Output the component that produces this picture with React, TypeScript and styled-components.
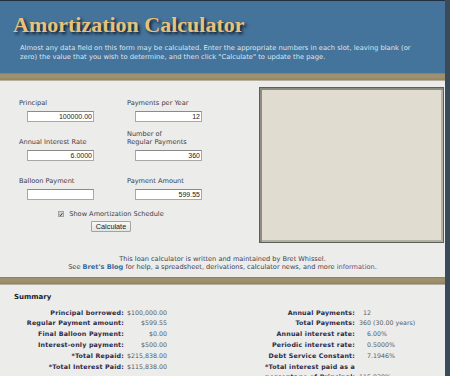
import React from "react";
import styled, { createGlobalStyle } from "styled-components";

const Global = createGlobalStyle`
  html, body { margin: 0; padding: 0; overflow: hidden; background: #3b4a59; }
  * { box-sizing: border-box; }
`;

const Frame = styled.div`
  width: 450px;
  height: 376px;
  overflow: hidden;
  display: flex;
  background: #3b4a59;
`;

const Page = styled.div`
  width: 445px;
  flex: none;
  background: #ececea;
  border-top: 1px solid #22303d;
  font-family: "DejaVu Sans", Verdana, sans-serif;
  color: #3d3b45;
`;

const Header = styled.header`
  background: #44739b;
  height: 72px;
  padding: 10.6px 0 0 13px;
`;

const Title = styled.h1`
  margin: 0;
  font-family: "Liberation Serif", "Times New Roman", serif;
  font-weight: bold;
  font-size: 22px;
  line-height: 26px;
  color: #e8c27c;
  text-shadow: 2px 2px 3px #121c27;
`;

const Intro = styled.p`
  margin: 6px 0 0 7px;
  width: 400px;
  font-size: 6.75px;
  line-height: 9px;
  color: #dfe7ef;
`;

const Band = styled.div<{ $h: number }>`
  height: ${(p) => p.$h}px;
  background: linear-gradient(
    to bottom,
    #8a7c5e 0%,
    #a39470 25%,
    #9c8c69 65%,
    #8f8570 82%,
    #c9c5ba 100%
  );
`;

const Main = styled.div`
  display: flex;
  align-items: flex-start;
`;

const FormArea = styled.div`
  width: 184px;
  margin: 2px 0 0 19px;
  display: flex;
  flex-direction: column;
  align-items: center;
`;

const FieldGrid = styled.div`
  width: 100%;
  display: grid;
  grid-template-columns: 108px 76px;
  grid-template-rows: repeat(3, 39px);
  align-items: end;
`;

const Field = styled.div`
  display: flex;
  flex-direction: column;
`;

const Label = styled.label`
  font-size: 6.6px;
  line-height: 8px;
`;

const Input = styled.input`
  margin: 4px 0 0 8px;
  width: 67px;
  height: 11px;
  padding: 0 1px;
  border: 1px solid #a8a8a8;
  border-top-color: #8a8a8a;
  background: #fff;
  font-family: "Liberation Sans", Arial, sans-serif;
  font-size: 7px;
  color: #222;
  text-align: right;
  outline: none;
`;

const CheckRow = styled.div`
  margin-top: 10px;
  display: flex;
  align-items: center;
  gap: 5px;
  font-size: 6.6px;
  line-height: 8px;
`;

const CheckBox = styled.span`
  width: 6px;
  height: 6px;
  display: inline-flex;
  align-items: center;
  justify-content: center;
  background: #d4d4d4;
  border: 1px solid #a2a2a2;
`;

const Button = styled.button`
  margin-top: 3px;
  width: 40px;
  height: 11px;
  padding: 0;
  border: 1px solid #a3a3a3;
  border-radius: 1px;
  background: linear-gradient(#f8f8f8, #e4e4e4);
  font-family: "Liberation Sans", Arial, sans-serif;
  font-size: 7.3px;
  line-height: 9px;
  color: #222;
`;

const Panel = styled.div`
  margin: 6px 1px 0 auto;
  width: 185px;
  height: 156px;
  background: #e0ddd0;
  border: 1px solid #5e5e58;
  box-shadow: inset 2px 2px 0 #8d8b82, inset -2px -2px 0 #b3b1a6;
`;

const Credits = styled.div`
  margin: 12px 0 6px;
  text-align: center;
  font-size: 6.6px;
  line-height: 8px;
  color: #44424c;
`;

const Link = styled.span<{ $visited?: boolean }>`
  color: ${(p) => (p.$visited ? "#74467a" : "#3a6b9c")};
  font-weight: ${(p) => (p.$visited ? "normal" : "bold")};
`;

const Summary = styled.section`
  padding: 7px 0 0 14px;
`;

const SummaryTitle = styled.h2`
  margin: 0;
  font-size: 7px;
  line-height: 10px;
  font-weight: bold;
  color: #22222e;
`;

const SummaryBody = styled.div`
  margin-top: 5.6px;
  display: flex;
  align-items: flex-start;
`;

const StatGrid = styled.div<{ $label: number; $value: number; $offset: number; $gap: number }>`
  margin-left: ${(p) => p.$offset}px;
  display: grid;
  grid-template-columns: ${(p) => p.$label}px ${(p) => p.$value}px;
  column-gap: ${(p) => p.$gap}px;
  align-items: end;
`;

const StatLabel = styled.div`
  text-align: right;
  font-size: 6.3px;
  line-height: 10.8px;
  font-weight: bold;
  letter-spacing: 0.2px;
  color: #2b2a47;
  white-space: nowrap;
`;

const StatValue = styled.div<{ $align?: "left" | "right"; $indent?: number }>`
  text-align: ${(p) => p.$align || "left"};
  padding-left: ${(p) => p.$indent || 0}px;
  font-size: 6.3px;
  line-height: 10.8px;
  color: #5a5a5e;
  white-space: nowrap;
`;

const leftStats: [string, string][] = [
  ["Principal borrowed:", "$100,000.00"],
  ["Regular Payment amount:", "$599.55"],
  ["Final Balloon Payment:", "$0.00"],
  ["Interest-only payment:", "$500.00"],
  ["*Total Repaid:", "$215,838.00"],
  ["*Total Interest Paid:", "$115,838.00"],
];

const rightStats: [React.ReactNode, string, number][] = [
  ["Annual Payments:", "12", 4],
  ["Total Payments:", "360 (30.00 years)", 0],
  ["Annual interest rate:", "6.00%", 8],
  ["Periodic interest rate:", "0.5000%", 8],
  ["Debt Service Constant:", "7.1946%", 8],
  [
    <>
      *Total interest paid as a<br />
      percentage of Principal:
    </>,
    "115.838%",
    0,
  ],
];

export default function App() {
  return (
    <>
      <Global />
      <Frame>
        <Page>
          <Header>
            <Title>Amortization Calculator</Title>
            <Intro>
              Almost any data field on this form may be calculated. Enter the appropriate numbers in
              each slot, leaving blank (or zero) the value that you wish to determine, and then click
              "Calculate" to update the page.
            </Intro>
          </Header>
          <Band $h={8} />
          <Main>
            <FormArea>
              <FieldGrid>
                <Field>
                  <Label>Principal</Label>
                  <Input defaultValue="100000.00" />
                </Field>
                <Field>
                  <Label>Payments per Year</Label>
                  <Input defaultValue="12" />
                </Field>
                <Field>
                  <Label>Annual Interest Rate</Label>
                  <Input defaultValue="6.0000" />
                </Field>
                <Field>
                  <Label>
                    Number of
                    <br />
                    Regular Payments
                  </Label>
                  <Input defaultValue="360" />
                </Field>
                <Field>
                  <Label>Balloon Payment</Label>
                  <Input defaultValue="" />
                </Field>
                <Field>
                  <Label>Payment Amount</Label>
                  <Input defaultValue="599.55" />
                </Field>
              </FieldGrid>
              <CheckRow>
                <CheckBox>
                  <svg width="5" height="5" viewBox="0 0 10 10">
                    <path d="M1.5 5.5 L4 8 L8.5 1.5" fill="none" stroke="#2a2a2a" strokeWidth="2" />
                  </svg>
                </CheckBox>
                Show Amortization Schedule
              </CheckRow>
              <Button>Calculate</Button>
            </FormArea>
            <Panel />
          </Main>
          <Credits>
            This loan calculator is written and maintained by Bret Whissel.
            <br />
            See <Link>Bret's Blog</Link> for help, a spreadsheet, derivations, calculator news, and
            more <Link $visited>information</Link>.
          </Credits>
          <Band $h={8} />
          <Summary>
            <SummaryTitle>Summary</SummaryTitle>
            <SummaryBody>
              <StatGrid $label={110} $value={40} $offset={0} $gap={3}>
                {leftStats.map(([l, v]) => (
                  <React.Fragment key={l}>
                    <StatLabel>{l}</StatLabel>
                    <StatValue $align="right">{v}</StatValue>
                  </React.Fragment>
                ))}
              </StatGrid>
              <StatGrid $label={90} $value={70} $offset={98} $gap={4}>
                {rightStats.map(([l, v, ind], i) => (
                  <React.Fragment key={i}>
                    <StatLabel>{l}</StatLabel>
                    <StatValue $indent={ind}>{v}</StatValue>
                  </React.Fragment>
                ))}
              </StatGrid>
            </SummaryBody>
          </Summary>
        </Page>
      </Frame>
    </>
  );
}
